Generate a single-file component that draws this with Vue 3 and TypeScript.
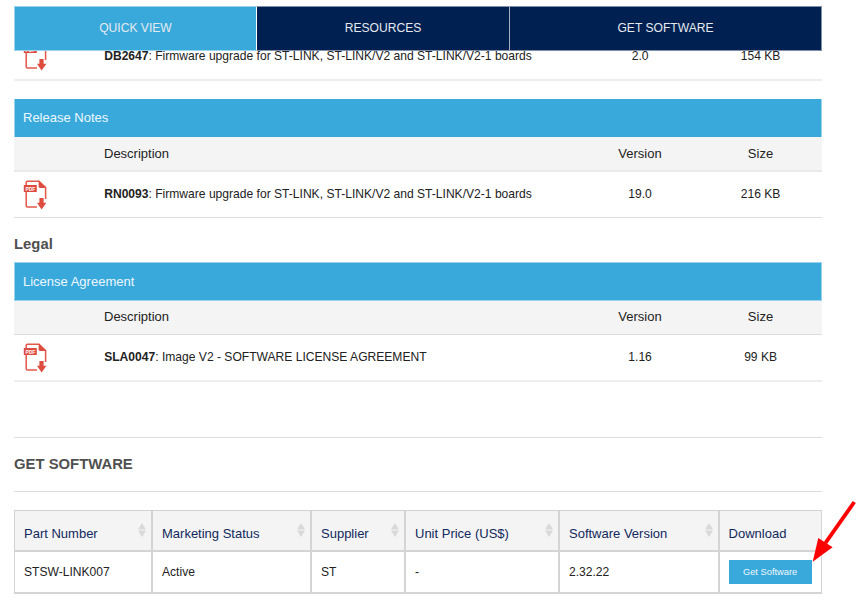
<script setup lang="ts">
import { defineComponent, h } from 'vue'

interface Doc { id: string; title: string; version: string; size: string }
interface DocTable { heading: string; section?: string; key: string; docs: Doc[] }

const tabs: string[] = ['QUICK VIEW', 'RESOURCES', 'GET SOFTWARE']
const firmware = 'Firmware upgrade for ST-LINK, ST-LINK/V2 and ST-LINK/V2-1 boards'
const tables: DocTable[] = [
  { key: 'brief', heading: '', docs: [{ id: 'DB2647', title: firmware, version: '2.0', size: '154 KB' }] },
  { key: 'notes', heading: 'Release Notes', docs: [{ id: 'RN0093', title: firmware, version: '19.0', size: '216 KB' }] },
  { key: 'license', section: 'Legal', heading: 'License Agreement', docs: [{ id: 'SLA0047', title: 'Image V2 - SOFTWARE LICENSE AGREEMENT', version: '1.16', size: '99 KB' }] },
]
const columns: string[] = ['Part Number', 'Marketing Status', 'Supplier', 'Unit Price (US$)', 'Software Version', 'Download']
const product: string[] = ['STSW-LINK007', 'Active', 'ST', '-', '2.32.22']

const PdfIcon = defineComponent({
  render: () =>
    h('svg', { width: 24, height: 30, viewBox: '0 0 24 30' }, [
      h('path', { d: 'M3.2 5V2.4Q3.2 1.2 4.4 1.2H16L22.6 7.6V19M3.2 12V25.8Q3.2 27 4.4 27H14', fill: 'none', stroke: '#e4584c', 'stroke-width': 1.5 }),
      h('path', { d: 'M15.6.6L23.3 8H17Q15.6 8 15.6 6.6Z', fill: '#de4b3f' }),
      h('rect', { x: 0.8, y: 5, width: 13, height: 7.1, rx: 0.5, fill: '#de4b3f' }),
      h('text', { x: 2.4, y: 10.8, fill: '#fff', 'font-size': 6, 'font-weight': 700, textLength: 9.8, lengthAdjust: 'spacingAndGlyphs' }, 'PDF'),
      h('path', { d: 'M16.4 18H20.6V22.8H23.4L18.6 29.4L14 22.8H16.4Z', fill: '#de4b3f' }),
    ]),
})
</script>

<template>
  <div class="page">
    <nav class="tabs">
      <a v-for="(tab, i) in tabs" :key="tab" :class="{ active: i === 0 }">{{ tab }}</a>
    </nav>
    <main>
      <section v-for="t in tables" :key="t.key" :class="['resource', t.key]">
        <h3 v-if="t.section">{{ t.section }}</h3>
        <template v-if="t.heading">
          <div class="heading">{{ t.heading }}</div>
          <div class="line labels"><span></span><span>Description</span><span class="mid">Version</span><span class="mid">Size</span></div>
        </template>
        <div v-for="d in t.docs" :key="d.id" class="line doc">
          <PdfIcon class="pdf" />
          <span><b>{{ d.id }}</b>: {{ d.title }}</span>
          <span class="mid">{{ d.version }}</span>
          <span class="mid">{{ d.size }}</span>
        </div>
      </section>
      <h2>GET SOFTWARE</h2>
      <div class="products">
        <div v-for="(c, i) in columns" :key="c" class="cell head">
          <span>{{ c }}</span>
          <svg v-if="i < 5" class="sort" width="8" height="14" viewBox="0 0 8 14"><path d="M4 0L8 6.4H0ZM0 7.6H8L4 14Z" fill="#d9d9d9" /></svg>
        </div>
        <div v-for="v in product" :key="v" class="cell">{{ v }}</div>
        <div class="cell"><button>Get Software</button></div>
      </div>
    </main>
    <svg class="pointer" width="50" height="66" viewBox="0 0 50 66">
      <path d="M44.3 4L15.5 44.8" stroke="#f00" stroke-width="3.8" fill="none" />
      <path d="M2.7 63.7L8.3 40L22.6 49.3Z" fill="#f00" />
    </svg>
  </div>
</template>

<style>
body { margin: 0; background: #fff; overflow: hidden; }
</style>

<style scoped>
.page { position: relative; width: 859px; height: 609px; overflow: hidden; font-family: "Liberation Sans", Arial, sans-serif; font-size: 13px; color: #222; }
.page * { box-sizing: border-box; }
.tabs { position: absolute; z-index: 1; top: 6px; left: 14px; width: 808px; height: 45px; display: grid; grid-template-columns: 242px 253px 313px; }
.tabs a { display: flex; align-items: center; justify-content: center; padding-bottom: 1px; background: #002052; border: 1px solid #8090a9; border-width: 1px 0; color: #e5e9ee; font-size: 12.1px; }
.tabs a.active { background: #39a9dc; border-color: #9cd4ee; border-left: 1px solid #9cd4ee; }
.tabs a + a { border-left: 1px solid #fff; }
.tabs a:last-child { border-left-color: #a5afc0; border-right: 1px solid #8090a9; }
main { padding: 33px 37px 0 14px; }
.heading { height: 38px; display: flex; align-items: center; padding: 0 8px 1px; background: #39a9dc; border: 1px solid #9cd4ee; border-width: 0 1px; color: #eef8fc; }
.line { display: grid; grid-template-columns: 90px 476px 120px 121px; align-items: center; border-bottom: 1px solid #ddd; }
.labels { height: 35px; background: #f4f4f4; border-bottom: 2px solid #e9e9e9; padding-bottom: 1px; }
.doc { height: 46px; font-size: 12.08px; }
.doc > span { padding: 0 0 2px 0.2px; }
.mid { text-align: center; }
.pdf { margin-left: 9px; }
.brief .doc { height: 48px; border-bottom: 2px solid #eee; }
.brief .doc > span { padding-bottom: 1px; }
.notes { margin-top: 18px; }
h3 { margin: 0; height: 44px; padding-top: 17px; font-size: 14.85px; line-height: 19px; color: #505050; }
.license .heading { height: 39px; border-width: 1px; }
.license .labels { height: 34px; border-bottom: 1px solid #ddd; padding-bottom: 2px; }
.license .doc { height: 47px; border-bottom: 2px solid #eee; }
h2 { margin: 55px 0 0; height: 55px; border: 1px solid #ddd; border-width: 1px 0; display: flex; align-items: center; padding-bottom: 1px; font-size: 14.85px; color: #505050; }
.products { margin-top: 18px; display: grid; grid-template-columns: 138px 159px 94px 154px 160px 102px; grid-template-rows: 41px 42px; border: 1px solid #d2d2d2; border-width: 1px 0 0 1px; width: 808px; }
.cell { display: flex; align-items: center; padding: 0 9px; border-right: 2px solid #d4d4d4; border-bottom: 2px solid #d4d4d4; font-size: 12.08px; }
.cell:nth-child(6n) { border-right-width: 1px; padding-left: 8.6px; }
.head { justify-content: space-between; background: #f4f4f4; font-size: 13px; color: #11295c; padding: 5px 5px 0 9px; }
.sort { margin-top: -6px; }
button { width: 83px; height: 24px; padding: 0; border: 0; background: #39a9dc; color: #f0f8fc; font-family: inherit; font-size: 9.3px; line-height: 23px; flex: none; }
.pointer { position: absolute; left: 810px; top: 498px; }
</style>
